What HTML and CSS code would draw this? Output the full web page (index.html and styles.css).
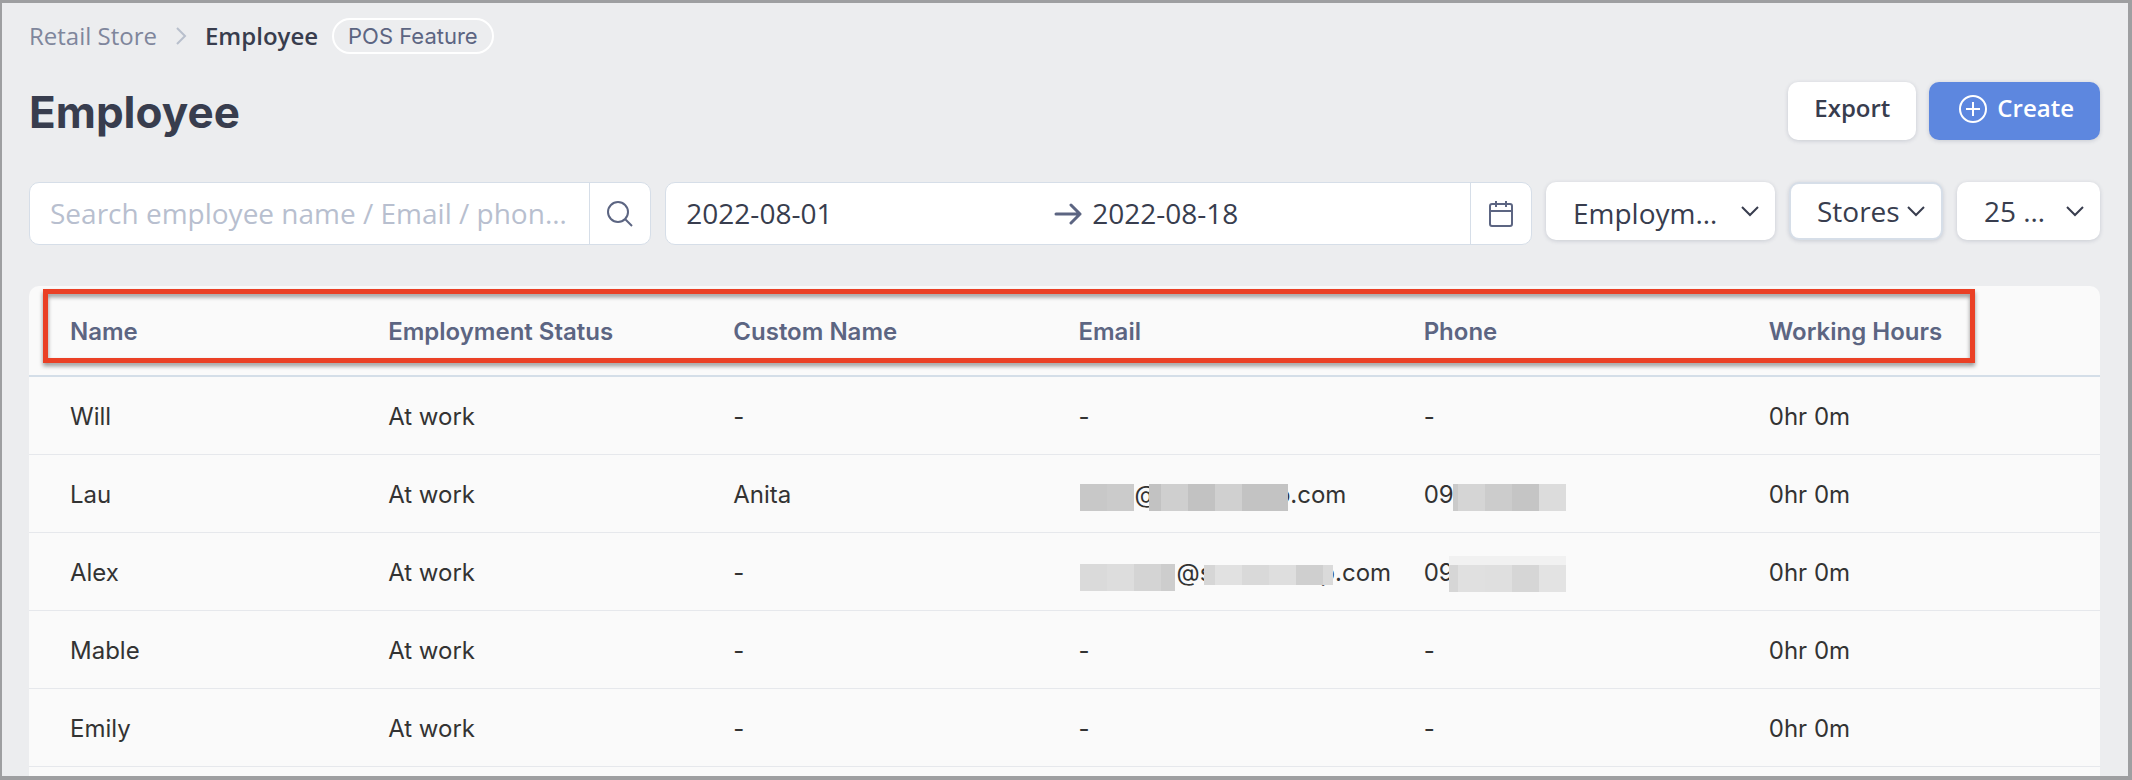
FILE: index.html
```html
<!DOCTYPE html>
<html lang="en">
<head>
<meta charset="utf-8">
<title>Employee</title>
<link rel="stylesheet" href="styles.css">
</head>
<body>
<main class="page">
  <nav class="breadcrumb" aria-label="Breadcrumb">
    <a class="crumb" href="#">Retail Store</a>
    <svg class="crumb-sep" viewBox="0 0 12 20" aria-hidden="true"><path d="M2 2l8 8-8 8"/></svg>
    <span class="crumb crumb-current">Employee</span>
    <span class="badge">POS Feature</span>
  </nav>

  <header class="heading">
    <h1 class="title">Employee</h1>
    <div class="actions">
      <button class="btn" type="button">Export</button>
      <button class="btn btn-primary" type="button">
        <svg class="icon-plus" viewBox="0 0 28 28" aria-hidden="true"><circle cx="14" cy="14" r="13"/><path d="M14 7v14M7 14h14"/></svg>
        Create
      </button>
    </div>
  </header>

  <form class="filters">
    <div class="field search">
      <input class="input" type="text" aria-label="Search employees" placeholder="Search employee name / Email / phone number">
      <button class="addon" type="button" aria-label="Search">
        <svg class="icon-search" viewBox="0 0 26 26" aria-hidden="true"><circle cx="11" cy="11" r="10"/><path d="M18 18l7 7"/></svg>
      </button>
    </div>
    <div class="field dates">
      <input class="input" type="text" aria-label="Start date" value="2022-08-01">
      <svg class="icon-arrow" viewBox="0 0 28 22" aria-hidden="true"><path d="M2 11h24M17 2l9 9-9 9"/></svg>
      <input class="input input-end" type="text" aria-label="End date" value="2022-08-18">
      <button class="addon" type="button" aria-label="Open calendar">
        <svg class="icon-calendar" viewBox="0 0 24 26" aria-hidden="true"><rect x="1" y="3" width="22" height="22" rx="2"/><path d="M1 10h22M7 0v6M17 0v6"/></svg>
      </button>
    </div>
    <div class="select select-status">
      <select class="select-box" aria-label="Employment status"><option>Employment Status</option></select>
      <svg class="chevron" viewBox="0 0 18 12" aria-hidden="true"><path d="M1 2l8 8 8-8"/></svg>
    </div>
    <div class="select select-stores">
      <select class="select-box" aria-label="Stores"><option>Stores</option></select>
      <svg class="chevron" viewBox="0 0 18 12" aria-hidden="true"><path d="M1 2l8 8 8-8"/></svg>
    </div>
    <div class="select select-size">
      <select class="select-box" aria-label="Rows per page"><option>25 results</option></select>
      <svg class="chevron" viewBox="0 0 18 12" aria-hidden="true"><path d="M1 2l8 8 8-8"/></svg>
    </div>
  </form>

  <section class="card">
    <table class="table">
      <thead>
        <tr><th>Name</th><th>Employment Status</th><th>Custom Name</th><th>Email</th><th>Phone</th><th>Working Hours</th></tr>
      </thead>
      <tbody>
        <tr><td>Will</td><td>At work</td><td>-</td><td>-</td><td>-</td><td>0hr 0m</td></tr>
        <tr><td>Lau</td><td>At work</td><td>Anita</td>
          <td><span class="masked"><i class="mask mask-user-a"></i>@<i class="mask mask-host-a"></i>p.com</span></td>
          <td><span class="masked">09<i class="mask mask-phone-a"></i></span></td><td>0hr 0m</td></tr>
        <tr><td>Alex</td><td>At work</td><td>-</td>
          <td><span class="masked"><i class="mask mask-user-b"></i>@s<i class="mask mask-host-b"></i>p.com</span></td>
          <td><span class="masked">09<i class="mask mask-phone-b"></i></span></td><td>0hr 0m</td></tr>
        <tr><td>Mable</td><td>At work</td><td>-</td><td>-</td><td>-</td><td>0hr 0m</td></tr>
        <tr><td>Emily</td><td>At work</td><td>-</td><td>-</td><td>-</td><td>0hr 0m</td></tr>
      </tbody>
    </table>
    <div class="highlight"></div>
  </section>
</main>
</body>
</html>
```

FILE: styles.css
```css
* { box-sizing: border-box; }

body {
  margin: 0;
  background: #ecedef;
  color: #383d4e;
  font-family: "Open Sans", "Noto Sans", sans-serif;
  font-size: 24px;
}

body::after {
  content: "";
  position: fixed;
  inset: 0;
  border: solid #9e9fa1;
  border-width: 3px 4px 4px 2px;
  pointer-events: none;
}

svg { fill: none; stroke: currentColor; flex: none; }

button, input, select { font: inherit; color: inherit; margin: 0; }

.page {
  display: flex;
  flex-direction: column;
  min-height: 100vh;
  padding: 18px 32px 0 29px;
}

.breadcrumb { display: flex; align-items: center; height: 36px; }
.crumb { padding-bottom: 2px; color: #7f869c; text-decoration: none; }
.crumb-sep { width: 12px; height: 20px; margin: 0 18px; stroke: #b8bfcc; stroke-width: 2; }
.crumb-current { color: #383d4e; font-weight: 600; }
.badge {
  display: flex;
  align-items: center;
  height: 36px;
  margin-left: 14px;
  padding: 0 14px;
  border: 2px solid #fff;
  border-radius: 18px;
  color: #5c6582;
  font: 22px Inter, sans-serif;
}

.heading { display: flex; justify-content: space-between; margin-top: 28px; height: 58px; }
.title { margin: 0; font: 700 44px/60px Inter, sans-serif; }

.actions { display: flex; gap: 13px; }
.btn {
  display: flex;
  align-items: center;
  gap: 10px;
  height: 58px;
  padding: 0 26px 8px;
  border: 0;
  border-radius: 10px;
  background: #fff;
  box-shadow: 0 1px 4px rgba(60, 70, 100, .2);
  font-weight: 600;
}
.btn-primary { padding-left: 30px; background: #5d87df; color: #fff; }
.icon-plus { width: 28px; height: 28px; margin-top: 4px; stroke-width: 2; }

.filters { display: flex; gap: 14px; margin-top: 42px; font-size: 28px; }
.field {
  display: flex;
  align-items: center;
  height: 63px;
  border: 1px solid #d6dee8;
  border-radius: 10px;
  background: #fff;
  overflow: hidden;
}
.search { flex: 622 1 0; min-width: 0; }
.dates { flex: 867 1 0; min-width: 0; }
.input {
  flex: 1 1 0;
  min-width: 0;
  height: 100%;
  padding: 0 20px 2px;
  border: 0;
  outline: 0;
  background: none;
  text-overflow: ellipsis;
}
.input::placeholder { color: #b8bfcf; opacity: 1; }
.input-end { padding-left: 10px; padding-right: 30px; }
.addon {
  display: flex;
  align-items: center;
  justify-content: center;
  width: 61px;
  height: 100%;
  padding: 0;
  border: 0;
  border-left: 1px solid #d6dee8;
  background: none;
  color: #5c6582;
}
.icon-search { width: 26px; height: 26px; stroke-width: 2; }
.icon-arrow { width: 28px; height: 22px; color: #5c6582; stroke-width: 3; stroke-linecap: round; stroke-linejoin: round; }
.icon-calendar { width: 24px; height: 26px; stroke-width: 2; }

.select {
  position: relative;
  height: 58px;
  border-radius: 10px;
  background: #fff;
  box-shadow: 0 1px 4px rgba(60, 70, 100, .2);
}
.select-status { width: 229px; }
.select-stores { width: 154px; border: 2px solid #d6dee8; }
.select-size { width: 143px; }
.select-box {
  width: 100%;
  height: 100%;
  padding: 0 54px 0 27px;
  border: 0;
  outline: 0;
  background: none;
  appearance: none;
  text-overflow: ellipsis;
  white-space: nowrap;
  overflow: hidden;
}
.select-status .select-box { padding-top: 4px; }
.select-stores .select-box { padding: 0 16px 0 26px; }
.chevron {
  position: absolute;
  top: 50%;
  right: 16px;
  width: 18px;
  height: 12px;
  margin-top: -6px;
  stroke-width: 2;
  pointer-events: none;
}

.card {
  position: relative;
  flex: 1;
  margin-top: 41px;
  border-radius: 10px 10px 0 0;
  background: #fafafa;
}
.table {
  width: 100%;
  table-layout: fixed;
  border-collapse: separate;
  border-spacing: 0;
  color: #333;
  font: 24px/30px Inter, sans-serif;
}
.table th, .table td { padding: 2px 0 0 14px; text-align: left; white-space: nowrap; }
.table th:first-child, .table td:first-child { padding-left: 41px; }
.table th { height: 91px; border-bottom: 2px solid #d4dee8; color: #5c6582; font-weight: 600; }
.table td { height: 78px; border-bottom: 1px solid #e6e8ec; }

.highlight {
  position: absolute;
  top: 3px;
  left: 14px;
  right: 125px;
  height: 74px;
  border: 5px solid #ea4025;
  filter: drop-shadow(0 3px 2px rgba(0, 0, 0, .4));
  pointer-events: none;
}

.masked { display: flex; align-items: center; height: 30px; }
.mask { z-index: 1; flex: none; height: 27px; margin-top: 6px; }
.mask-user-a { width: 54px; margin-left: 2px; background: linear-gradient(90deg, #c8c8c8 27px, #cbcbcb 27px); }
.mask-host-a {
  width: 139px;
  margin-left: -9px;
  margin-right: -12px;
  background: linear-gradient(90deg, #c2c2c2 12px, #cfcfcf 12px 39px, #c2c2c2 39px 66px, #d0d0d0 66px 93px, #c3c3c3 93px);
}
.mask-phone-a { width: 113px; margin-left: -1px; background: linear-gradient(90deg, #cacaca 5px, #d5d5d5 5px 32px, #ccc 32px 59px, #c5c5c5 59px 86px, #dcdcdc 86px); }
.mask-user-b {
  width: 95px;
  margin: 10px 1px 0 2px;
  background: linear-gradient(90deg, #dadada 27px, #ddd 27px 54px, #d4d4d4 54px 81px, #cdcdcd 81px);
}
.mask-host-b {
  width: 129px;
  height: 20px;
  margin: 4px -13px 0 -8px;
  background: linear-gradient(90deg, #d6d6d6 11px, #e1e1e1 11px 38px, #d9d9d9 38px 65px, #dedede 65px 92px, #cfcfcf 92px 119px, #dadada 119px);
}
.mask-phone-b {
  width: 117px;
  height: 36px;
  margin: 2px 0 0 -5px;
  background:
    linear-gradient(#f1f1f1, #f1f1f1) 0 0 / 100% 9px no-repeat,
    linear-gradient(90deg, #d6d6d6 9px, #e0e0e0 9px 36px, #dfdfdf 36px 63px, #d6d6d6 63px 90px, #e3e3e3 90px);
}
```
